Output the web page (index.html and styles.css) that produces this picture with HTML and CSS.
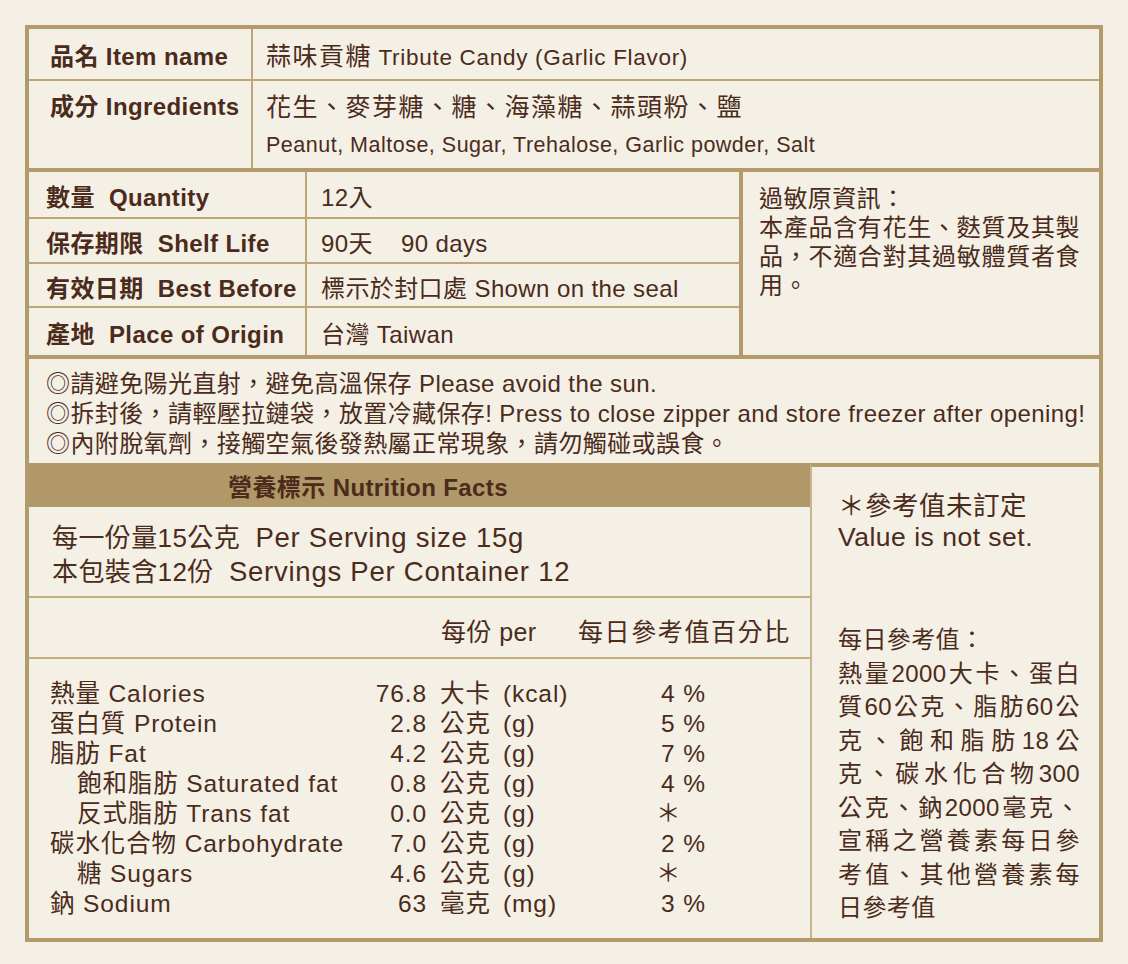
FILE: index.html
```html
<!DOCTYPE html>
<html lang="zh-Hant">

<head>
    <meta charset="UTF-8">
    <meta name="viewport" content="width=device-width, initial-scale=1.0">
    <title>蒜味貢糖 標示</title>
    <link rel="stylesheet" href="styles.css">
</head>

<body>
    <div class="label">

        <div class="info">
            <div class="infoKey firstRow">品名 Item name</div>
            <div class="infoVal firstRow">
                <div><span class="zhBig">蒜味貢糖</span> <span class="enBig">Tribute Candy (Garlic Flavor)</span></div>
            </div>
            <div class="infoKey topText">成分 Ingredients</div>
            <div class="infoVal topText">
                <div class="zhBig">花生、麥芽糖、糖、海藻糖、蒜頭粉、鹽</div>
                <div>Peanut, Maltose, Sugar, Trehalose, Garlic powder, Salt</div>
            </div>
        </div>

        <div class="specs">
            <div class="specTable">
                <div class="specRow">
                    <div class="specKey">數量&nbsp; Quantity</div>
                    <div class="specVal">12入</div>
                </div>
                <div class="specRow">
                    <div class="specKey">保存期限&nbsp; Shelf Life</div>
                    <div class="specVal"><div>90天<span class="gap"></span>90 days</div></div>
                </div>
                <div class="specRow">
                    <div class="specKey">有效日期&nbsp; Best Before</div>
                    <div class="specVal">標示於封口處 Shown on the seal</div>
                </div>
                <div class="specRow">
                    <div class="specKey">產地&nbsp; Place of Origin</div>
                    <div class="specVal">台灣 Taiwan</div>
                </div>
            </div>
            <div class="allergy">
                <p>過敏原資訊：</p>
                <p>本產品含有花生、麩質及其製品，不適合對其過敏體質者食用。</p>
            </div>
        </div>

        <div class="notes">
            <p>◎請避免陽光直射，避免高溫保存 Please avoid the sun.</p>
            <p>◎拆封後，請輕壓拉鏈袋，放置冷藏保存! Press to close zipper and store freezer after opening!</p>
            <p>◎內附脫氧劑，接觸空氣後發熱屬正常現象，請勿觸碰或誤食。</p>
        </div>

        <div class="nutrition">
            <div class="facts">
                <div class="factsTitle">營養標示 Nutrition Facts</div>
                <div class="serving">
                    <p>每一份量15公克&nbsp; <span class="en">Per Serving size 15g</span></p>
                    <p>本包裝含12份&nbsp; <span class="en">Servings Per Container 12</span></p>
                </div>
                <div class="factsHead">
                    <span>每份 per</span>
                    <span class="pctHead">每日參考值百分比</span>
                </div>
                <div class="factsRows">
                    <div class="factRow">
                        <span class="name">熱量 Calories</span><span class="num">76.8</span><span class="unit">大卡</span><span class="paren">(kcal)</span><span class="pct">4 %</span>
                    </div>
                    <div class="factRow">
                        <span class="name">蛋白質 Protein</span><span class="num">2.8</span><span class="unit">公克</span><span class="paren">(g)</span><span class="pct">5 %</span>
                    </div>
                    <div class="factRow">
                        <span class="name">脂肪 Fat</span><span class="num">4.2</span><span class="unit">公克</span><span class="paren">(g)</span><span class="pct">7 %</span>
                    </div>
                    <div class="factRow">
                        <span class="name sub">飽和脂肪 Saturated fat</span><span class="num">0.8</span><span class="unit">公克</span><span class="paren">(g)</span><span class="pct">4 %</span>
                    </div>
                    <div class="factRow">
                        <span class="name sub">反式脂肪 Trans fat</span><span class="num">0.0</span><span class="unit">公克</span><span class="paren">(g)</span><span class="pct star">＊</span>
                    </div>
                    <div class="factRow">
                        <span class="name">碳水化合物 Carbohydrate</span><span class="num">7.0</span><span class="unit">公克</span><span class="paren">(g)</span><span class="pct">2 %</span>
                    </div>
                    <div class="factRow">
                        <span class="name sub">糖 Sugars</span><span class="num">4.6</span><span class="unit">公克</span><span class="paren">(g)</span><span class="pct star">＊</span>
                    </div>
                    <div class="factRow">
                        <span class="name">鈉 Sodium</span><span class="num">63</span><span class="unit">毫克</span><span class="paren">(mg)</span><span class="pct">3 %</span>
                    </div>
                </div>
            </div>

            <div class="ref">
                <div class="refNote">
                    <p>＊參考值未訂定</p>
                    <p>Value is not set.</p>
                </div>
                <div class="refDaily">
                    <p>每日參考值：</p>
                    <p class="just">熱量2000大卡、蛋白</p>
                    <p class="just">質60公克、脂肪60公</p>
                    <p class="just">克、飽和脂肪18公</p>
                    <p class="just">克、碳水化合物300</p>
                    <p class="just">公克、鈉2000毫克、</p>
                    <p class="just">宣稱之營養素每日參</p>
                    <p class="just">考值、其他營養素每</p>
                    <p>日參考值</p>
                </div>
            </div>
        </div>

    </div>
</body>

</html>
```

FILE: styles.css
```css
body {
    margin: 0;
    background: #f4f0e5;
    color: #4b2b1b;
    font-family: "Liberation Sans", "Noto Sans CJK TC", sans-serif;
    font-size: 24px;
    letter-spacing: 0.4px;
}

p {
    margin: 0;
}

.label {
    width: 1078px;
    margin: 25px 0 0 25px;
    border: 4px solid #b39b6b;
    box-sizing: border-box;
}

/* item name + ingredients */
.info {
    display: grid;
    grid-template-columns: 224px 1fr;
    grid-template-rows: 52px 87px;
    border-bottom: 4px solid #b39b6b;
}

.infoKey {
    border-right: 2px solid #bfa678;
    padding-left: 21px;
    font-weight: bold;
}

.infoVal {
    padding-left: 13px;
    font-size: 21.5px;
    letter-spacing: 0.5px;
}

.firstRow {
    display: flex;
    align-items: center;
    border-bottom: 2px solid #bfa678;
}

.infoKey.topText {
    padding-top: 9px;
    line-height: 34px;
}

.infoVal.topText {
    padding-top: 7px;
    line-height: 38px;
}

.zhBig {
    font-size: 25px;
    letter-spacing: 1.5px;
}

.enBig {
    font-size: 22.5px;
    letter-spacing: 0.7px;
}

/* quantity / shelf life table */
.specs {
    display: flex;
    border-bottom: 4px solid #b39b6b;
}

.specTable {
    width: 714px;
    border-right: 4px solid #b39b6b;
    box-sizing: border-box;
}

.specRow {
    display: grid;
    grid-template-columns: 278px 1fr;
    height: 45px;
    border-bottom: 2px solid #bfa678;
}

.specRow:nth-child(2) {
    height: 43px;
}

.specRow:nth-child(3) {
    height: 42px;
}

.specRow:last-child {
    height: 47px;
    border-bottom: none;
}

.specKey {
    display: flex;
    align-items: center;
    padding-left: 17px;
    padding-top: 2px;
    border-right: 2px solid #bfa678;
    font-weight: bold;
}

.specVal {
    display: flex;
    align-items: center;
    padding-left: 14px;
    padding-top: 2px;
}

.gap {
    display: inline-block;
    width: 28px;
}

.allergy {
    flex: 1;
    padding: 12px 19px 0 16px;
    line-height: 29px;
    text-align: justify;
}

/* warnings */
.notes {
    height: 104px;
    padding: 10px 0 0 17px;
    box-sizing: border-box;
    line-height: 30px;
    white-space: nowrap;
}

/* nutrition facts */
.nutrition {
    display: flex;
}

.facts {
    width: 781px;
}

.factsTitle {
    height: 44px;
    line-height: 49px;
    padding-left: 199px;
    background: #b09868;
    font-weight: bold;
}

.serving {
    height: 91px;
    padding: 14px 0 0 23px;
    box-sizing: border-box;
    border-bottom: 2px solid #c4ad80;
    font-size: 26px;
    line-height: 34px;
}

.serving .en {
    font-size: 27.5px;
    letter-spacing: 0.75px;
}

.factsHead {
    display: grid;
    grid-template-columns: 137px auto;
    align-items: center;
    height: 61px;
    padding: 5px 0 0 412px;
    box-sizing: border-box;
    border-bottom: 2px solid #c4ad80;
    font-size: 25px;
}

.pctHead {
    letter-spacing: 1.6px;
}

.factsRows {
    padding: 20px 0 19px 21px;
}

.factRow {
    display: grid;
    grid-template-columns: 320px 57px 76px 158px auto;
    line-height: 30px;
    font-size: 24.5px;
    letter-spacing: 0.9px;
}

.name.sub {
    padding-left: 27px;
}

.num {
    text-align: right;
}

.unit {
    padding-left: 13px;
}

.star {
    margin-left: -5px;
}

.ref {
    flex: 1;
    border-top: 4px solid #b39b6b;
    border-left: 2px solid #c9b48c;
    padding: 24px 0 0 26px;
}

.refNote {
    width: 242px;
    font-size: 26.5px;
    line-height: 31px;
    letter-spacing: 0.5px;
}

.refDaily {
    width: 242px;
    margin-top: 70px;
    line-height: 33.5px;
}

.just {
    text-align: justify;
    text-align-last: justify;
}
```
